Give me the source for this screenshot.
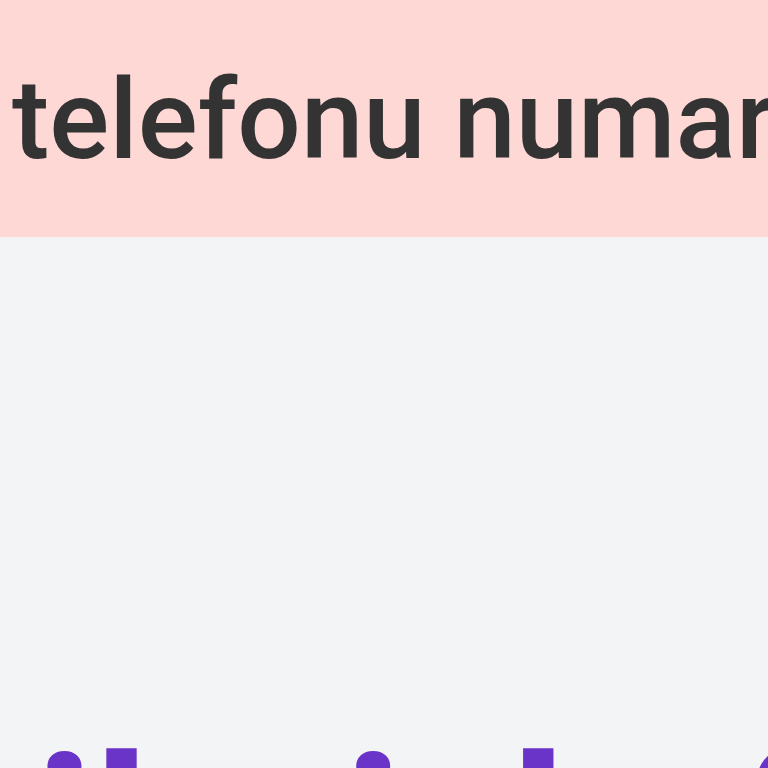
export default function App() {
  return (
    <div className="h-screen w-full overflow-hidden bg-[#f3f4f6] font-['Roboto',sans-serif]">
      <div className="h-[237px] bg-[#fed8d5] pl-[12px] pt-[64px]">
        <p className="whitespace-nowrap text-[112px] font-medium leading-none text-[#333333]">
          telefonu numarası
        </p>
      </div>
      <div className="pl-[36px] pt-[492px]">
        <h2 className="whitespace-nowrap text-[215px] font-bold leading-none text-[#6b34c8]">
          ileriyle farklı
        </h2>
      </div>
    </div>
  );
}
